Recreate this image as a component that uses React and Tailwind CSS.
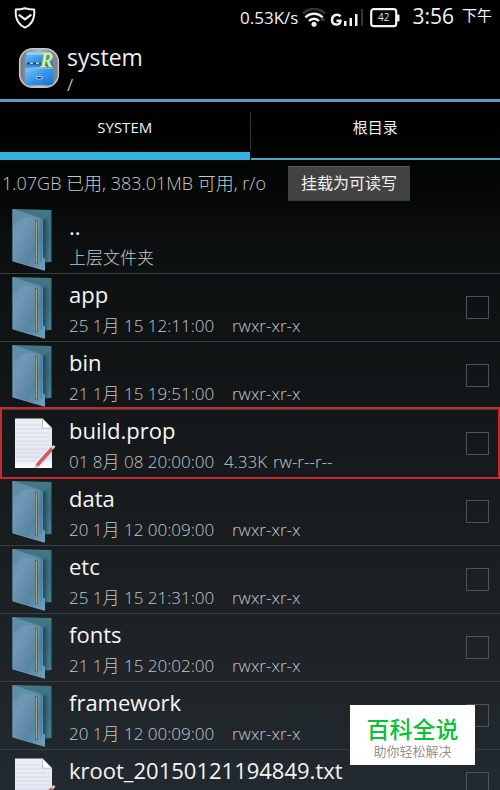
import React from "react";

const entries = [
  { name: "..", note: "上层文件夹", kind: "folder", up: true },
  { name: "app", date: "25 1月 15 12:11:00", perms: "rwxr-xr-x", kind: "folder" },
  { name: "bin", date: "21 1月 15 19:51:00", perms: "rwxr-xr-x", kind: "folder" },
  { name: "build.prop", date: "01 8月 08 20:00:00", size: "4.33K", perms: "rw-r--r--", kind: "file", marked: true },
  { name: "data", date: "20 1月 12 00:09:00", perms: "rwxr-xr-x", kind: "folder" },
  { name: "etc", date: "25 1月 15 21:31:00", perms: "rwxr-xr-x", kind: "folder" },
  { name: "fonts", date: "21 1月 15 20:02:00", perms: "rwxr-xr-x", kind: "folder" },
  { name: "framework", date: "20 1月 12 00:09:00", perms: "rwxr-xr-x", kind: "folder" },
  { name: "kroot_20150121194849.txt", kind: "file" },
];

function ShieldIcon() {
  return (
    <svg className="h-[22px] w-[22px]" viewBox="0 0 22 22" fill="none" stroke="#f4f4f4" strokeWidth="2" strokeLinejoin="round">
      <path d="M11 1.3C8 2.2 4.6 2.6 1.8 2.6 1.4 7.6 2 11.7 4.3 15.1 6 17.7 8.3 19.5 11 20.7c2.7-1.200 5-3 6.700-5.600C20 11.700 20.600 7.600 20.200 2.600 17.400 2.600 14 2.200 11 1.300Z" />
      <path d="m4.700 7.600 6.300 4.800 6.300-4.800" strokeWidth="2.200" />
    </svg>
  );
}

function WifiIcon() {
  return (
    <svg className="h-5 w-6" viewBox="0 0 24 20" fill="none" strokeLinecap="butt">
      <path d="M1 5.500C7-.7 17-.7 23 5.500" stroke="#343634" strokeWidth="2.600" />
      <path d="M3.500 9.500c4.500-5 12.500-5 17 0" stroke="#f2f2f2" strokeWidth="2.600" />
      <path d="M7 13c2.700-3 7.300-3 10 0" stroke="#f2f2f2" strokeWidth="2.400" />
      <circle cx="12" cy="16.300" r="2.500" fill="#f2f2f2" />
      <path d="m18.500 12.500 2.300-3 2.300 3Z" fill="#2e7040" />
    </svg>
  );
}

function SignalIcon() {
  return (
    <svg className="h-5 w-[34px]" viewBox="0 0 34 20">
      <path d="M10.600 8.400C8.200 5.500 2 6.500 2 12c0 5.800 8.500 6.200 8.500.8H6.500" fill="none" stroke="#f2f2f2" strokeWidth="2.500" />
      <path d="M14 13h2.500v5H14ZM19.500 10H22v8h-2.500ZM25 6h2.500v12H25Z" fill="#f2f2f2" />
      <path d="M31 1h2v17h-2Z" fill="#343434" />
    </svg>
  );
}

function BatteryIcon() {
  return (
    <svg className="h-5 w-[30px]" viewBox="0 0 30 20" role="img" aria-label="42">
      <rect x="1.200" y="1.200" width="25" height="17" rx="2.500" fill="none" stroke="#f4f4f4" strokeWidth="2.200" />
      <path d="M27 6.500h1.500q1 0 1 1v5q0 1-1 1H27Z" fill="#f4f4f4" />
      <text x="13.700" y="13.400" textAnchor="middle" fontSize="10" fill="#e0e0e0">42</text>
    </svg>
  );
}

function AppIcon() {
  return (
    <svg className="h-[42px] w-[42px] shrink-0" viewBox="0 0 42 42">
      <defs>
        <linearGradient id="drawer" x1="0" y1="0" x2="1" y2="1">
          <stop offset="0" stopColor="#7cc8fa" />
          <stop offset=".5" stopColor="#3795ea" />
          <stop offset="1" stopColor="#1c6fce" />
        </linearGradient>
        <linearGradient id="rim" x1="0" y1="0" x2="1" y2="0">
          <stop offset="0" stopColor="#727780" />
          <stop offset=".5" stopColor="#a5b8c9" />
          <stop offset="1" stopColor="#777b80" />
        </linearGradient>
      </defs>
      <rect x="1.700" y="1.700" width="38.600" height="38.600" rx="13" fill="url(#rim)" stroke="#c4c6c6" strokeWidth="1.600" />
      <path d="M9 5h24l2.500 15h-29Z" fill="url(#drawer)" />
      <path d="M7 21h28.500v14q0 3-3 3H10q-3 0-3-3Z" fill="url(#drawer)" />
      <path d="M9 5h24l.5 3h-25Z" fill="#8ad0f5" />
      <path d="M9 15.500h14v2H9Z" fill="#264565" />
      <path d="M12 15.500h3v1.500h-3ZM18 15.500h3v1.500h-3Z" fill="#a8d9f5" />
      <path d="M7 21.500h28.500" stroke="#6db9f4" />
      <path d="M18.500 29.500h5.500v2q-2.700 1.800-5.500 0Z" fill="#153f77" stroke="#cce6fa" strokeWidth=".8" />
      <text x="22" y="19.500" fontSize="20" fontWeight="700" fontStyle="italic" fontFamily="Liberation Serif, serif" fill="#e3f45c">R</text>
    </svg>
  );
}

function FolderIcon() {
  return (
    <svg className="h-[63px] w-10" viewBox="0 0 40 63" aria-hidden="true">
      <defs>
        <linearGradient id="folderFront" x1="0" y1="0" x2="1" y2="1">
          <stop offset="0" stopColor="#6093aa" />
          <stop offset=".3" stopColor="#7099b6" />
          <stop offset=".65" stopColor="#5884a2" />
          <stop offset="1" stopColor="#6ba2c0" />
        </linearGradient>
        <linearGradient id="folderBack" x1="0" y1="0" x2="0" y2="1">
          <stop offset="0" stopColor="#437885" />
          <stop offset=".5" stopColor="#376f7e" />
          <stop offset="1" stopColor="#4a7f90" />
        </linearGradient>
        <linearGradient id="folderShade" x1="0" y1="0" x2="1" y2="0">
          <stop offset="0" stopColor="#1d4a58" />
          <stop offset="1" stopColor="#1d4a58" stopOpacity="0" />
        </linearGradient>
      </defs>
      <path d="M1 1 39.500 2v52L30 54.500Z" fill="url(#folderBack)" />
      <path d="M31 12 37 9v45l-6 .5Z" fill="url(#folderShade)" />
      <path d="M.8 1 27 9.500l4 2.500v37l2 2v11.500L.8 53Z" fill="url(#folderFront)" />
      <path d="M1 1 27 9.500l3.500 2.500C16 7 7 10 1 19Z" fill="#5389a0" fillOpacity=".5" />
      <path d="M.8 1v52l31.700 9.300" fill="none" stroke="#7eafc7" strokeWidth=".7" />
      <path d="M29 11v43" fill="none" stroke="#477990" strokeWidth=".8" />
      <path d="M24.300 13v42" stroke="#3d5459" strokeWidth="2.600" strokeLinecap="round" />
      <path d="M24.300 13v42" stroke="#b5a981" strokeWidth="1.200" strokeLinecap="round" />
    </svg>
  );
}

function FileIcon() {
  return (
    <svg className="ml-[3px] h-[51px] w-[41px]" viewBox="0 0 41 51" aria-hidden="true">
      <defs>
        <linearGradient id="paper" x1="0" y1="0" x2="0" y2="1">
          <stop offset="0" stopColor="#eceef4" />
          <stop offset=".8" stopColor="#e4e7f2" />
          <stop offset="1" stopColor="#fff" />
        </linearGradient>
      </defs>
      <path d="M0 .5h27.500l9.500 10V50H0Z" fill="url(#paper)" />
      <path d="M1 7h25M1 11h26M1 15h35M1 19h35M1 23h35M1 27h35M1 31h31M1 35h28M1 39h24M1 43h21" stroke="#d3daea" strokeWidth="1" />
      <path d="M27.500.5v9.700H37Z" fill="#fff" stroke="#a3a7ad" strokeWidth=".7" />
      <path d="M37 30v6L25 49h-4Z" fill="#a9adbc" fillOpacity=".25" />
      <path d="m21 46.500 15-17 2 2-15 17Z" fill="#d45e61" stroke="#a93a40" strokeWidth=".6" />
      <path d="m36 29.500 2.500-2.500 2 1.500-2.500 3Z" fill="#e4caca" />
      <path d="m21 46.500-2 3.500 4-1.500Z" fill="#ddb08f" />
    </svg>
  );
}

function StatusBar() {
  return (
    <div className="flex h-[35px] shrink-0 items-center justify-between pr-2 pl-[14px] text-[#f2f2f2]">
      <ShieldIcon />
      <div className="flex items-center">
        <span className="mr-1 text-[17px]">0.53K/s</span>
        <WifiIcon />
        <span className="ml-1"><SignalIcon /></span>
        <span className="ml-1.5"><BatteryIcon /></span>
        <span className="ml-3 flex items-center pb-1">
          <span className="text-[21px] leading-7">3:56</span>
          <span className="ml-2 text-[15px]">下午</span>
        </span>
      </div>
    </div>
  );
}

function Row({ entry }) {
  const id = "pick-" + entry.name;
  return (
    <li className="relative flex h-[68px] shrink-0 border-b border-[#3b3e40] pr-[11px] pl-3">
      <span className="flex w-[57px] shrink-0 items-center">
        {entry.kind === "folder" ? <FolderIcon /> : <FileIcon />}
      </span>
      <label htmlFor={entry.up ? undefined : id} className="min-w-0 flex-1 pt-1">
        <span className="block w-fit text-[22px] leading-8 text-[#f6f6f6]">{entry.name}</span>
        <span className="flex w-fit pt-0.5 text-[17px] leading-7 font-light whitespace-nowrap text-[#c4c7c9]">
          {entry.note && <span>{entry.note}</span>}
          {entry.date && <span className="w-[147px]">{entry.date}</span>}
          {entry.size && <span className="ml-2 w-[41px]">{entry.size}</span>}
          {entry.perms && <span className={entry.size ? "ml-2" : "ml-4"}>{entry.perms}</span>}
        </span>
      </label>
      {!entry.up && (
        <input id={id} type="checkbox" className="mt-[22px] h-[23px] w-[23px] shrink-0 appearance-none border border-[#505355] bg-transparent checked:bg-[#33b5e5]" />
      )}
      {entry.marked && (
        <span className="pointer-events-none absolute inset-x-0 -top-[3px] -bottom-[2px] z-10 border-2 border-[#c9292f]" />
      )}
    </li>
  );
}

export default function App() {
  return (
    <div className="relative flex h-screen flex-col overflow-hidden bg-linear-to-b from-black from-5% via-[#0c0f0f] via-30% to-[#232a2f] font-['Open_Sans','Noto_Sans_CJK_SC',sans-serif]">
      <StatusBar />
      <header className="flex h-[67px] shrink-0 items-start border-b-[3px] border-[#559fc4] pl-[18px]">
        <span className="mt-3"><AppIcon /></span>
        <div className="ml-[7px] pt-1.5 text-[#efefef]">
          <h1 className="text-[23px] leading-8">system</h1>
          <p className="text-[17px] leading-6 text-[#b9b9b9]">/</p>
        </div>
      </header>
      <div role="tablist" className="flex h-[58px] shrink-0 text-[15px] text-[#f0f0f0]">
        <button type="button" role="tab" aria-selected="true" className="flex-1 border-b-8 border-[#35b1df]">
          SYSTEM
        </button>
        <div className="mt-2.5 h-[38px] w-px bg-[#303335]" />
        <button type="button" role="tab" aria-selected="false" className="flex-1 border-b-2 border-[#559fc4] pb-1.5">
          根目录
        </button>
      </div>
      <div className="flex h-[46px] shrink-0 items-center pl-0.5 text-[18px] text-[#c4c7c9]">
        <span className="w-[286px] font-light whitespace-nowrap">1.07GB 已用, 383.01MB 可用, r/o</span>
        <button type="button" className="h-[35px] border border-t-[#5a5a5a] border-r-[#424242] border-b-[#383838] border-l-[#424242] bg-[#424242] px-3 text-[16px] text-[#f2f2f2]">
          挂载为可读写
        </button>
      </div>
      <ul className="flex min-h-0 flex-1 flex-col overflow-hidden">
        {entries.map((entry) => (
          <Row key={entry.name} entry={entry} />
        ))}
      </ul>
      <aside className="absolute right-[25px] bottom-[25px] z-20 flex h-[60px] w-[125px] flex-col items-center bg-white pt-3">
        <strong className="text-[23px] leading-6 font-medium text-[#08c136]">百科全说</strong>
        <span className="text-[13px] leading-5 text-[#929292]">助你轻松解决</span>
      </aside>
    </div>
  );
}
